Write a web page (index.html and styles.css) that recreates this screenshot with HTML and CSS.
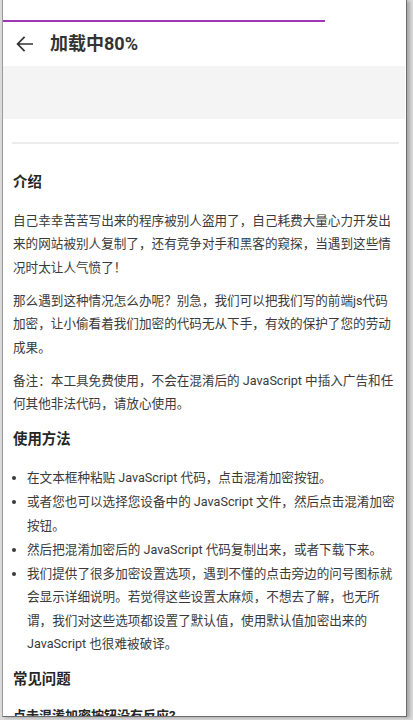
FILE: index.html
```html
<!DOCTYPE html>
<html lang="zh-CN">
<head>
<meta charset="utf-8">
<title>加载中80%</title>
<link rel="stylesheet" href="styles.css">
</head>
<body>
<div class="frame">
  <div class="progress"><div class="progress-bar"></div></div>
  <header class="topbar">
    <svg class="back" viewBox="0 0 24 24" width="24" height="24"><path d="M4.6 12H20M11.6 4.9L4.6 12l7 7.1" fill="none" stroke="#333" stroke-width="1.7"/></svg>
    <h1 class="title">加载中80%</h1>
  </header>
  <div class="placeholder"></div>
  <div class="divider"></div>
  <main class="content">
    <h2 class="section-title first">介绍</h2>
    <p class="text">自己幸幸苦苦写出来的程序被别人盗用了，自己耗费大量心力开发出来的网站被别人复制了，还有竞争对手和黑客的窥探，当遇到这些情况时太让人气愤了！</p>
    <p class="text">那么遇到这种情况怎么办呢？别急，我们可以把我们写的前端js代码加密，让小偷看着我们加密的代码无从下手，有效的保护了您的劳动成果。</p>
    <p class="text">备注：本工具免费使用，不会在混淆后的 JavaScript 中插入广告和任何其他非法代码，请放心使用。</p>
    <h2 class="section-title">使用方法</h2>
    <ul class="steps">
      <li>在文本框种粘贴 JavaScript 代码，点击混淆加密按钮。</li>
      <li>或者您也可以选择您设备中的 JavaScript 文件，然后点击混淆加密按钮。</li>
      <li>然后把混淆加密后的 JavaScript 代码复制出来，或者下载下来。</li>
      <li>我们提供了很多加密设置选项，遇到不懂的点击旁边的问号图标就会显示详细说明。若觉得这些设置太麻烦，不想去了解，也无所谓，我们对这些选项都设置了默认值，使用默认值加密出来的 JavaScript 也很难被破译。</li>
    </ul>
    <h2 class="section-title">常见问题</h2>
    <h3 class="question">点击混淆加密按钮没有反应?</h3>
  </main>
</div>
</body>
</html>
```

FILE: styles.css
```css
html, body {
  margin: 0;
  padding: 0;
}
body {
  width: 413px;
  height: 720px;
  overflow: hidden;
  background: #dadada;
  font-family: Roboto, "Noto Sans CJK SC", sans-serif;
  color: #3a3a3a;
}
.frame {
  margin-left: 2px;
  width: 403px;
  height: 716px;
  background: #fff;
  border-left: 1px solid #9a9a9a;
  border-right: 1px solid #6c6c6c;
  border-bottom: 1px solid #6c6c6c;
  overflow: hidden;
  box-shadow: 3px 1px 3px rgba(0, 0, 0, 0.22);
}
.progress {
  margin-top: 20px;
  height: 2px;
}
.progress-bar {
  width: 80%;
  height: 2px;
  background: #9c36b5;
}
.topbar {
  height: 44px;
  display: flex;
  align-items: center;
  padding-left: 10px;
}
.back {
  display: block;
  flex: none;
}
.title {
  margin: 0 0 0 13px;
  font-size: 18px;
  line-height: 24px;
  font-weight: 700;
  color: #333;
}
.placeholder {
  height: 53px;
  margin-right: 1px;
  background: #f4f4f4;
}
.divider {
  height: 2px;
  margin: 23px 7px 0 9px;
  background: #ececec;
}
.content {
  padding: 14px 9px 0 10px;
}
.section-title {
  margin: 15px 0 16px;
  font-size: 14.4px;
  line-height: 20px;
  font-weight: 700;
  color: #262626;
}
.text {
  margin: 0 0 9.6px;
  font-size: 12.6px;
  line-height: 23.4px;
}
.steps {
  margin: 0;
  padding-left: 14px;
  font-size: 12.6px;
  line-height: 23.4px;
}
.steps li {
  margin-bottom: 0.6px;
}
.question {
  margin: 12px 0 0;
  font-size: 13px;
  line-height: 20px;
  font-weight: 700;
  color: #262626;
}
```
